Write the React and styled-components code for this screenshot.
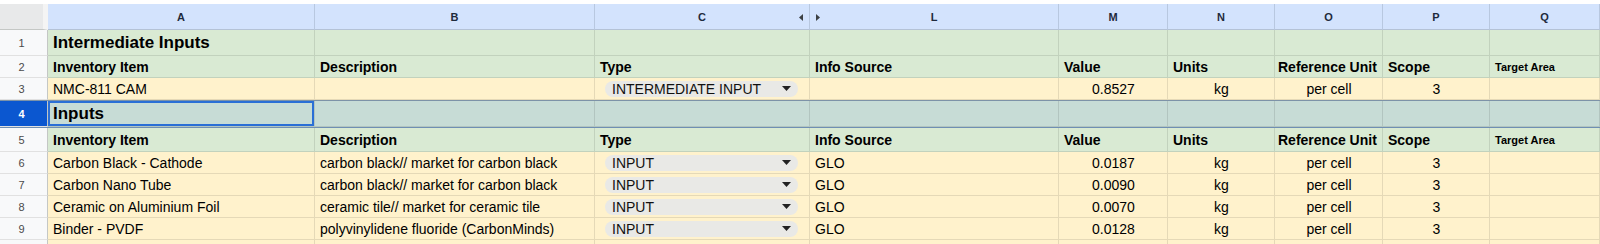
import React from "react";
import styled, { createGlobalStyle, css } from "styled-components";

const Global = createGlobalStyle`
  html, body { margin: 0; padding: 0; background: #ffffff; }
  body { font-family: "Liberation Sans", Arial, sans-serif; color: #000; }
`;

const COLS = [267, 280, 215, 249, 109, 107, 108, 107, 110];
const TEMPLATE = `48px ${COLS.map((c) => c + "px").join(" ")}`;

const GREEN = "#d9ead3";
const YELLOW = "#fff2cc";
const SELECTED = "#c7dcd6";
const GRID = "rgba(0,0,0,0.1)";

const Sheet = styled.div`
  width: 1600px;
  padding-top: 4px;
  display: flex;
  flex-direction: column;
`;

const Row = styled.div`
  display: grid;
  grid-template-columns: ${TEMPLATE};
  height: ${(p) => p.$h}px;
  ${(p) =>
    p.$selected &&
    css`
      border-top: 1px solid #7d93a8;
      border-bottom: 1px solid #6f8fb3;
    `}
`;

const Corner = styled.div`
  background: #e8e9ea;
  border-right: 5px solid #f4f4f4;
  border-bottom: 1px solid #c4c7c5;
`;

const ColHead = styled.div`
  position: relative;
  background: #d3e3fd;
  border-right: 1px solid #b8c8e0;
  border-bottom: 1px solid #b4c2d6;
  display: flex;
  align-items: center;
  justify-content: center;
  font-size: 11px;
  font-weight: 700;
  color: #1e2a3c;
`;

const HideMark = styled.svg`
  position: absolute;
  top: 10px;
  ${(p) => (p.$side === "right" ? "right: 6px;" : "left: 6px;")}
`;

const RowNum = styled.div`
  background: ${(p) => (p.$active ? "#0b57d0" : "#f8f9fa")};
  color: ${(p) => (p.$active ? "#ffffff" : "#4a4a4a")};
  font-weight: ${(p) => (p.$active ? 700 : 400)};
  font-size: 11px;
  display: flex;
  align-items: center;
  justify-content: center;
  padding-right: 4px;
  border-right: 1px solid #c4c7c5;
  border-bottom: 1px solid #e1e1e1;
`;

const Cell = styled.div`
  position: relative;
  background: ${(p) => p.$bg};
  border-right: 1px solid ${GRID};
  border-bottom: 1px solid ${GRID};
  display: flex;
  align-items: center;
  justify-content: ${(p) => (p.$align === "center" ? "center" : "flex-start")};
  padding: 0 4px 0 5px;
  font-size: ${(p) => p.$size || 14}px;
  font-weight: ${(p) => (p.$bold ? 700 : 400)};
  color: #000;
  white-space: nowrap;
  overflow: ${(p) => (p.$spill ? "visible" : "hidden")};
  box-sizing: border-box;
  ${(p) =>
    p.$active &&
    css`
      box-shadow: inset 0 0 0 2px #2a6fd6;
    `}
`;

const Chip = styled.div`
  flex: 1;
  height: 16px;
  margin: 0 7px 0 5px;
  padding: 0 7px 0 7px;
  border-radius: 8px;
  background: #e9e9e6;
  display: flex;
  align-items: center;
  justify-content: space-between;
  font-size: 14px;
  color: #111;
`;

const Caret = () => (
  <svg width="9" height="5" viewBox="0 0 9 5">
    <path d="M0 0 L9 0 L4.5 5 Z" fill="#222" />
  </svg>
);

const Tail = styled.div`
  display: grid;
  grid-template-columns: ${TEMPLATE};
  height: 4px;
  border-bottom: 2px solid #9b9b9b;
`;

const TailCell = styled.div`
  background: ${(p) => p.$bg};
  border-right: 1px solid ${(p) => (p.$num ? "#c4c7c5" : GRID)};
`;

const LETTERS = ["A", "B", "C", "L", "M", "N", "O", "P", "Q"];
const ALIGN = ["left", "left", "left", "left", "center", "center", "center", "center", "left"];

const HEADERS = [
  "Inventory Item",
  "Description",
  "Type",
  "Info Source",
  "Value",
  "Units",
  "Reference Unit",
  "Scope",
  "Target Area",
];

const INPUTS = [
  ["Carbon Black - Cathode", "carbon black// market for carbon black", "INPUT", "GLO", "0.0187"],
  ["Carbon Nano Tube", "carbon black// market for carbon black", "INPUT", "GLO", "0.0090"],
  ["Ceramic on Aluminium Foil", "ceramic tile// market for ceramic tile", "INPUT", "GLO", "0.0070"],
  ["Binder - PVDF", "polyvinylidene fluoride (CarbonMinds)", "INPUT", "GLO", "0.0128"],
];

function HeaderRow({ n, h }) {
  return (
    <Row $h={h}>
      <RowNum>{n}</RowNum>
      {HEADERS.map((t, i) => (
        <Cell
          key={i}
          $bg={GREEN}
          $bold
          $spill={i === 6}
          $size={i === 8 ? 11 : 14}
          style={i === 6 ? { paddingLeft: 3, zIndex: 1 } : undefined}
        >
          {t}
        </Cell>
      ))}
    </Row>
  );
}

function SectionRow({ n, title, selected }) {
  return (
    <Row $h={26} $selected={selected}>
      <RowNum $active={selected}>{n}</RowNum>
      {LETTERS.map((l, i) => (
        <Cell
          key={l}
          $bg={selected ? SELECTED : GREEN}
          $bold
          $size={17}
          $active={selected && i === 0}
        >
          {i === 0 ? title : ""}
        </Cell>
      ))}
    </Row>
  );
}

function DataRow({ n, item, desc, type, source, value }) {
  const vals = [item, desc, null, source, value, "kg", "per cell", "3", ""];
  return (
    <Row $h={22}>
      <RowNum>{n}</RowNum>
      {vals.map((v, i) =>
        i === 2 ? (
          <Cell key={i} $bg={YELLOW}>
            <Chip>
              <span>{type}</span>
              <Caret />
            </Chip>
          </Cell>
        ) : (
          <Cell key={i} $bg={YELLOW} $align={ALIGN[i]}>
            {v}
          </Cell>
        )
      )}
    </Row>
  );
}

export default function App() {
  return (
    <>
      <Global />
      <Sheet>
        <Row $h={26}>
          <Corner />
          {LETTERS.map((l) => (
            <ColHead key={l}>
              {l}
              {l === "C" && (
                <HideMark $side="right" width="4" height="7" viewBox="0 0 4 7">
                  <path d="M4 0 L0 3.5 L4 7 Z" fill="#3c4043" />
                </HideMark>
              )}
              {l === "L" && (
                <HideMark $side="left" width="4" height="7" viewBox="0 0 4 7">
                  <path d="M0 0 L4 3.5 L0 7 Z" fill="#3c4043" />
                </HideMark>
              )}
            </ColHead>
          ))}
        </Row>

        <SectionRow n={1} title="Intermediate Inputs" />
        <HeaderRow n={2} h={22} />
        <DataRow
          n={3}
          item="NMC-811 CAM"
          desc=""
          type="INTERMEDIATE INPUT"
          source=""
          value="0.8527"
        />
        <SectionRow n={4} title="Inputs" selected />
        <HeaderRow n={5} h={24} />
        {INPUTS.map((r, i) => (
          <DataRow
            key={i}
            n={6 + i}
            item={r[0]}
            desc={r[1]}
            type={r[2]}
            source={r[3]}
            value={r[4]}
          />
        ))}
        <Tail>
          <TailCell $bg="#f8f9fa" $num />
          {LETTERS.map((l) => (
            <TailCell key={l} $bg={YELLOW} />
          ))}
        </Tail>
      </Sheet>
    </>
  );
}
